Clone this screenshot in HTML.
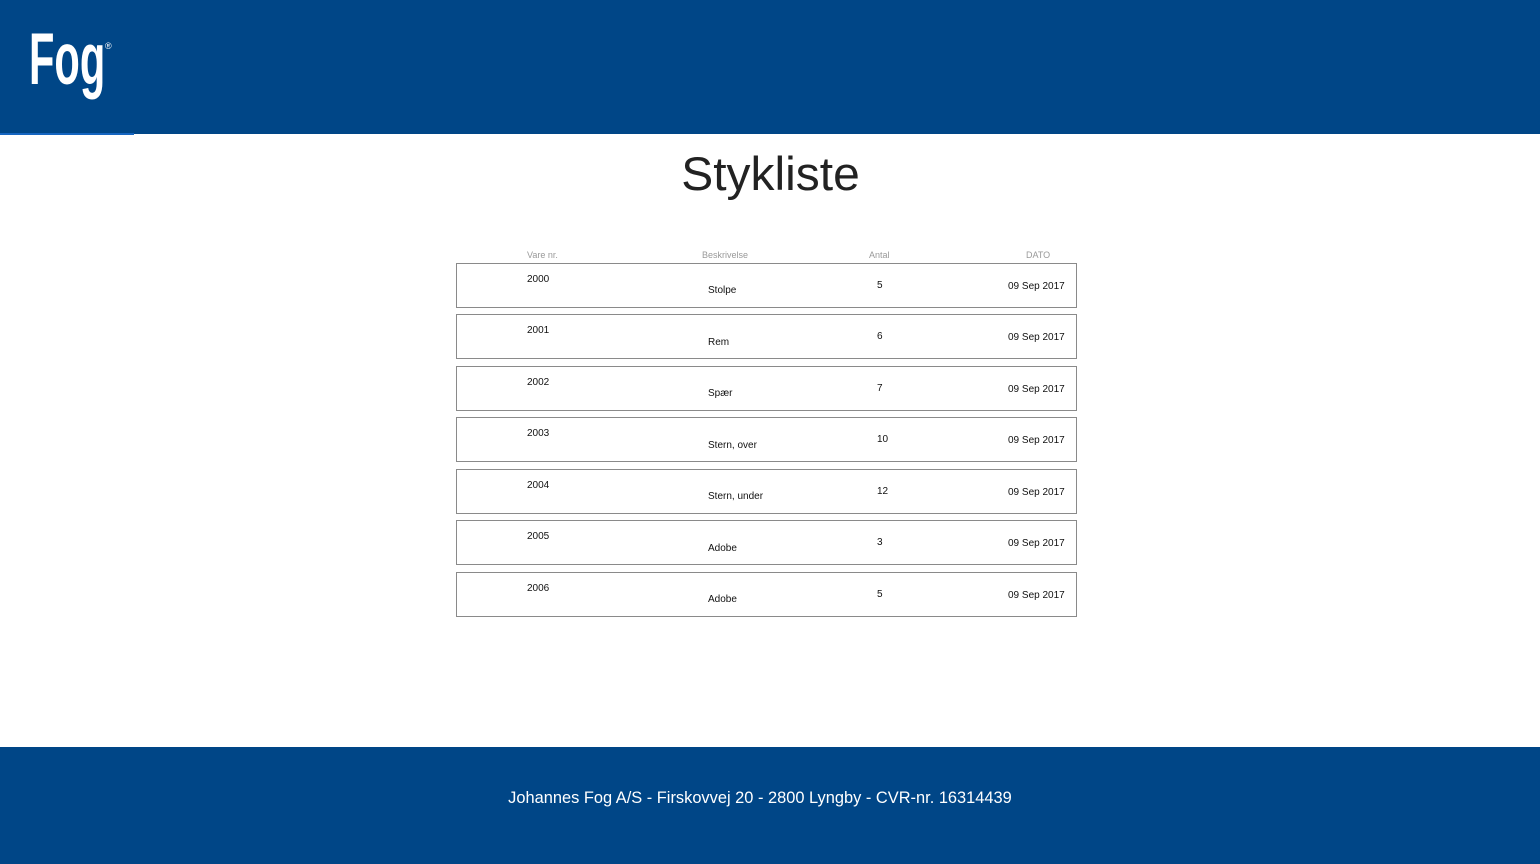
<!DOCTYPE html>
<html><head><meta charset="utf-8"><style>
body{margin:0;width:1540px;height:864px;position:relative;background:#fff;font-family:"Liberation Sans",sans-serif;overflow:hidden}
.hdr{position:absolute;left:0;top:0;width:1540px;height:134px;background:#004687}
.logo{position:absolute;left:29px;top:20px;color:#fff;font-size:73px;font-weight:bold;font-family:"Liberation Sans Narrow","Liberation Sans",sans-serif;transform:scaleX(0.57);transform-origin:left top;line-height:80px}
.reg{position:absolute;left:105px;top:41px;color:#fff;font-size:9px}
.line{position:absolute;left:0;top:133px;width:134px;height:2px;background:#1565c0}
h1{position:absolute;left:0;width:1540px;top:146px;margin:0;text-align:center;font-weight:normal;font-size:47px;color:#222;line-height:56px}
h1 span{display:inline-block;transform:scaleX(1.02)}
.th{position:absolute;top:250px;font-size:9px;color:#999}
.row{position:absolute;left:456px;width:619px;height:43px;border:1px solid #8a8a8a}
.c{position:absolute;font-size:10px;color:#111}
.ftr{position:absolute;left:-10px;top:747px;width:1540px;height:117px;color:#fff;font-size:17px;text-align:center;line-height:102px}
.fbg{position:absolute;left:0;top:747px;width:1540px;height:117px;background:#004687}
.ftr span{display:inline-block;transform:scaleX(0.965)}
</style></head><body>
<div class="hdr"><div class="logo">Fog</div><div class="reg">®</div></div>
<div class="line"></div>
<h1><span>Stykliste</span></h1>
<div class="th" style="left:527px">Vare nr.</div>
<div class="th" style="left:702px">Beskrivelse</div>
<div class="th" style="left:869px">Antal</div>
<div class="th" style="left:1026px">DATO</div>

<div class="row" style="top:263px"><span class="c" style="left:70px;top:10px">2000</span><span class="c" style="left:251px;top:21px">Stolpe</span><span class="c" style="left:420px;top:16px">5</span><span class="c" style="left:551px;top:17px">09 Sep 2017</span></div>
<div class="row" style="top:314px"><span class="c" style="left:70px;top:10px">2001</span><span class="c" style="left:251px;top:22px">Rem</span><span class="c" style="left:420px;top:16px">6</span><span class="c" style="left:551px;top:17px">09 Sep 2017</span></div>
<div class="row" style="top:366px"><span class="c" style="left:70px;top:10px">2002</span><span class="c" style="left:251px;top:21px">Spær</span><span class="c" style="left:420px;top:16px">7</span><span class="c" style="left:551px;top:17px">09 Sep 2017</span></div>
<div class="row" style="top:417px"><span class="c" style="left:70px;top:10px">2003</span><span class="c" style="left:251px;top:22px">Stern, over</span><span class="c" style="left:420px;top:16px">10</span><span class="c" style="left:551px;top:17px">09 Sep 2017</span></div>
<div class="row" style="top:469px"><span class="c" style="left:70px;top:10px">2004</span><span class="c" style="left:251px;top:21px">Stern, under</span><span class="c" style="left:420px;top:16px">12</span><span class="c" style="left:551px;top:17px">09 Sep 2017</span></div>
<div class="row" style="top:520px"><span class="c" style="left:70px;top:10px">2005</span><span class="c" style="left:251px;top:22px">Adobe</span><span class="c" style="left:420px;top:16px">3</span><span class="c" style="left:551px;top:17px">09 Sep 2017</span></div>
<div class="row" style="top:572px"><span class="c" style="left:70px;top:10px">2006</span><span class="c" style="left:251px;top:21px">Adobe</span><span class="c" style="left:420px;top:16px">5</span><span class="c" style="left:551px;top:17px">09 Sep 2017</span></div>

<div class="fbg"></div>
<div class="ftr"><span>Johannes Fog A/S - Firskovvej 20 - 2800 Lyngby - CVR-nr. 16314439</span></div>
</body></html>
